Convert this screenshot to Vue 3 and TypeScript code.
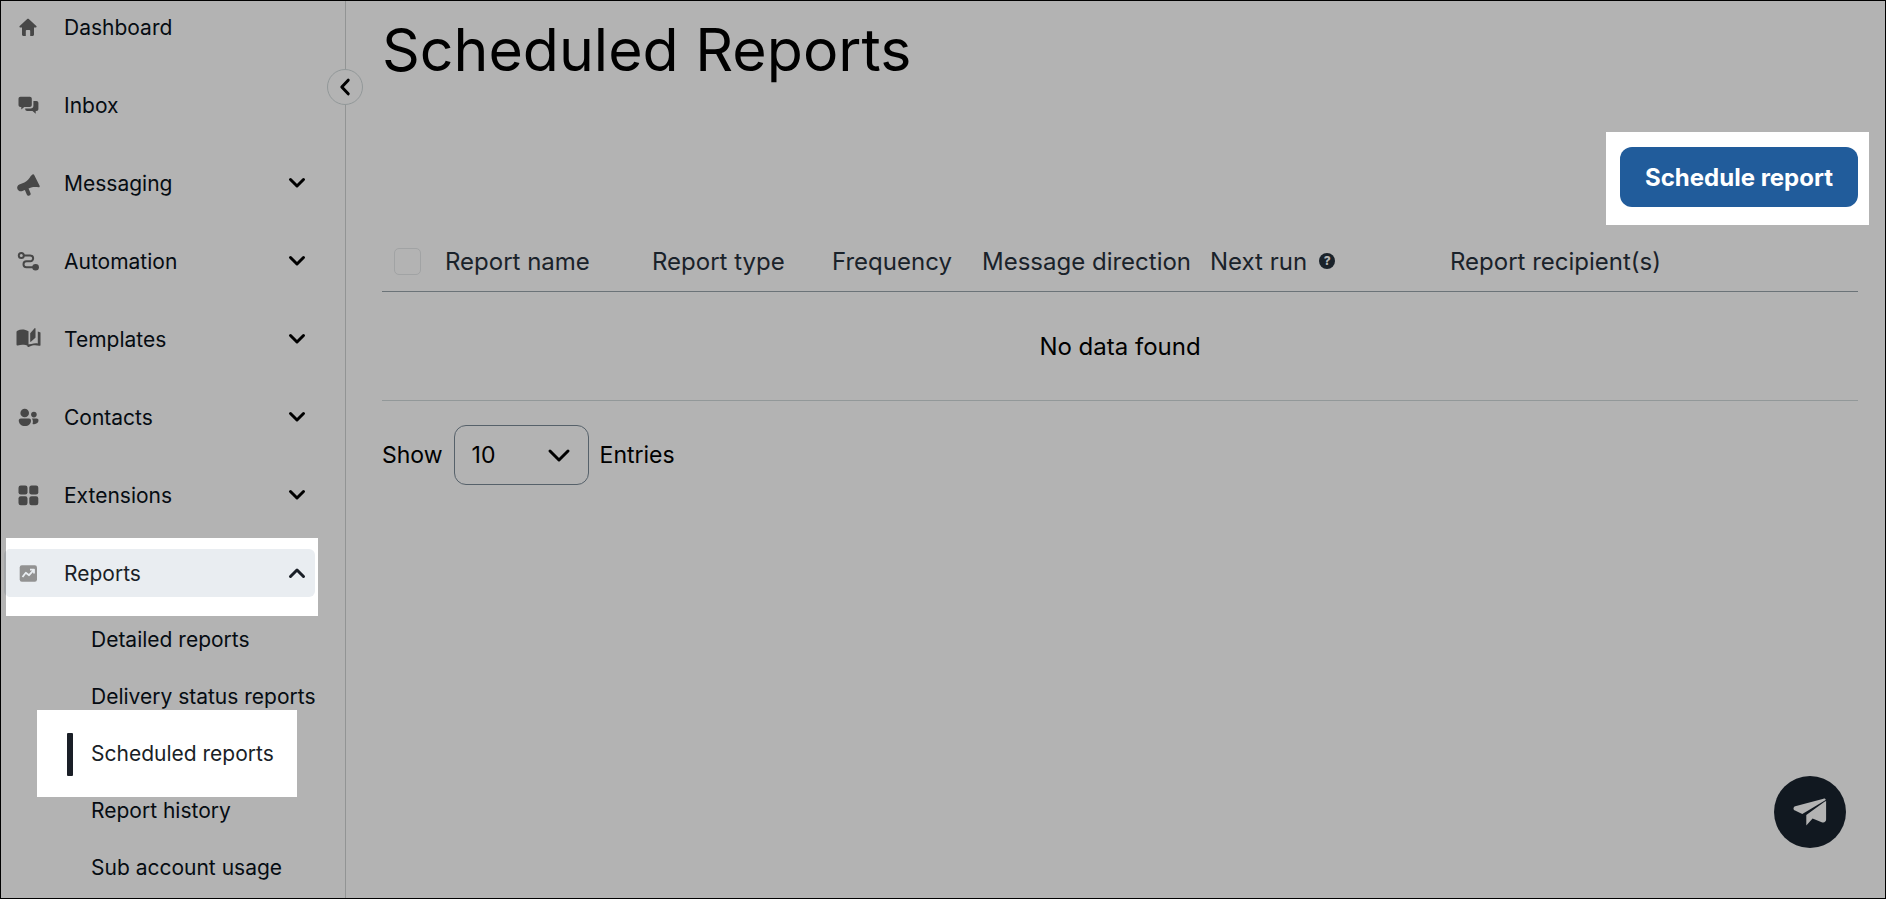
<script setup lang="ts">
import { ref } from 'vue'

interface NavItem {
  label: string
  icon: string
  expandable: boolean
}

const items: NavItem[] = [
  { label: 'Dashboard', icon: 'home', expandable: false },
  { label: 'Inbox', icon: 'inbox', expandable: false },
  { label: 'Messaging', icon: 'megaphone', expandable: true },
  { label: 'Automation', icon: 'route', expandable: true },
  { label: 'Templates', icon: 'book', expandable: true },
  { label: 'Contacts', icon: 'people', expandable: true },
  { label: 'Extensions', icon: 'grid', expandable: true },
  { label: 'Reports', icon: 'chart', expandable: true },
]

const reportPages: string[] = [
  'Detailed reports',
  'Delivery status reports',
  'Scheduled reports',
  'Report history',
  'Sub account usage',
]

const openSection = 'Reports'
const currentPage = 'Scheduled reports'
const pageSize = ref<number>(10)
const allSelected = ref<boolean>(false)
</script>

<template>
  <div class="app">
    <aside class="sidebar">
      <nav aria-label="Main">
        <ul class="nav">
          <li v-for="item in items" :key="item.label">
            <component
              :is="item.expandable ? 'button' : 'a'"
              class="nav-item"
              :class="{ open: item.label === openSection }"
              :href="item.expandable ? undefined : '#'"
              :type="item.expandable ? 'button' : undefined"
              :aria-expanded="item.expandable ? item.label === openSection : undefined"
            >
              <svg class="nav-icon" viewBox="0 0 26 26" aria-hidden="true">
                <path
                  v-if="item.icon === 'home'"
                  d="M12.2 5 4.7 12.1c-.6.6-.3 1.4.5 1.4H7v7.1c0 .8.5 1.3 1.3 1.3h2.5v-5.1c0-.5.3-.8.8-.8h2.8c.5 0 .8.3.8.8v5.1h2.500c.8 0 1.300-.5 1.300-1.300v-7.100h1.800c.8 0 1.100-.8.5-1.400L13.800 5c-.5-.5-1.100-.5-1.600 0Z"
                />
                <g v-else-if="item.icon === 'inbox'">
                  <path d="M5.500 4.700h9.300c1.200 0 2 .8 2 2v6.200c0 1.200-.8 2-2 2H9.200L6.300 17.600v-2.700h-.8c-1.200 0-2-.8-2-2V6.700c0-1.200.8-2 2-2Z" />
                  <path d="M18.400 8.900h3c1.200 0 2 .8 2 2v6.200c0 1.200-.8 2-2 2h-.7v2.700L17.500 19.100h-5.300c-1.200 0-2-.8-2-2v-.6h5.400c1.700 0 2.800-1.100 2.800-2.800Z" />
                </g>
                <g v-else-if="item.icon === 'megaphone'">
                  <path d="M15.800 6 17.500 4.500c.6-.5 1.400-.3 1.700.4l5.400 10.800c.4.8 0 1.500-.9 1.500-4.700-.5-7.800-.1-11.500 1.900l-4.800 2c-2.200.7-4-.1-4.900-1.800-.9-2 0-3.900 1.800-4.700l5.100-2.100c2.900-1.600 4.700-3.400 6.400-6.500Z" />
                  <path d="m11.300 18.300 2.300 5.400" fill="none" stroke="currentColor" stroke-width="4" stroke-linecap="round" />
                </g>
                <g v-else-if="item.icon === 'route'" fill="none" stroke="currentColor" stroke-width="2">
                  <circle cx="6.300" cy="7.400" r="2.500" />
                  <path d="M9 7.400h6.200a2.900 2.900 0 0 1 0 5.900h-3.700a3 3 0 0 0 0 6h7" />
                  <circle cx="20.600" cy="19.300" r="3.300" fill="currentColor" stroke="none" />
                </g>
                <g v-else-if="item.icon === 'book'">
                  <path d="M1.500 6c0-.6.3-1 .9-1.300 3.200-1.600 7.400-1.500 11.100.5v14.900c-3.400-1.700-7.400-1.800-10.600-.7-.9.300-1.400 0-1.400-.8Z" />
                  <path d="m15.400 7 4.200-4.700c.3-.4.900-.2.900.3v8.700c0 .3-.1.600-.4.800l-4.200 3.700c-.3.300-.7.100-.7-.3V7.800c0-.3 0-.6.2-.8Z" />
                  <path d="M22.800 5.500c1 .2 1.900.5 2.700 1v12.400c0 .8-.5 1.100-1.300.9-3.600-1.100-6.800-.8-9.400.8-.7.500-1.500.5-2.300.2v-2.200c3-.1 6.300-1.900 10.300-1.200Z" />
                </g>
                <g v-else-if="item.icon === 'people'">
                  <circle cx="9.700" cy="9" r="4.300" />
                  <path d="M5.800 14.500h8.200c1.200 0 2 .8 2 2 0 3.500-2.500 5.600-6.100 5.600s-6.100-2.100-6.100-5.600c0-1.200.8-2 2-2Z" />
                  <circle cx="18.900" cy="10.600" r="2.800" />
                  <path d="M16.900 14.500h4.700c1.200 0 1.900.7 1.900 1.800 0 2.900-2.600 4.400-5.900 3.700.5-2 .5-4-.7-5.500Z" />
                </g>
                <g v-else-if="item.icon === 'grid'">
                  <rect x="3.500" y="3.500" width="9" height="9" rx="2.200" />
                  <rect x="14.300" y="3.500" width="9" height="9" rx="2.200" />
                  <rect x="3.500" y="14.300" width="9" height="9" rx="2.200" />
                  <rect x="14.300" y="14.300" width="9" height="9" rx="2.200" />
                </g>
                <g v-else>
                  <rect x="4.700" y="5.300" width="17.300" height="16.500" rx="2.200" />
                  <path
                    d="m7.500 17 3.300-4.200 3.300 2.400 4.700-5.400M15 9.600h4v4"
                    fill="none"
                    stroke="#e9edf1"
                    stroke-width="1.800"
                    stroke-linejoin="round"
                  />
                </g>
              </svg>
              <span class="nav-label">{{ item.label }}</span>
              <svg v-if="item.expandable" class="chevron" viewBox="0 0 18 12" aria-hidden="true">
                <path :d="item.label === openSection ? 'm2.500 9.500 6.500-6.500 6.500 6.500' : 'm2.500 2.500 6.500 6.500 6.500-6.500'" />
              </svg>
            </component>
            <ul v-if="item.label === openSection" class="subnav">
              <li v-for="page in reportPages" :key="page">
                <a
                  href="#"
                  class="sub-item"
                  :class="{ current: page === currentPage }"
                  :aria-current="page === currentPage ? 'page' : undefined"
                >{{ page }}</a>
              </li>
            </ul>
          </li>
        </ul>
      </nav>
      <button type="button" class="collapse" aria-label="Collapse menu">
        <svg viewBox="0 0 12 18" aria-hidden="true"><path d="M9.200 2.200 2.800 9l6.400 6.800" /></svg>
      </button>
    </aside>

    <main class="content">
      <h1>Scheduled Reports</h1>
      <div class="actions">
        <button type="button" class="primary">Schedule report</button>
      </div>

      <table>
        <colgroup>
          <col class="c-check" />
          <col class="c-name" />
          <col class="c-type" />
          <col class="c-frequency" />
          <col class="c-direction" />
          <col class="c-next" />
          <col />
        </colgroup>
        <thead>
          <tr>
            <th class="check-cell">
              <input v-model="allSelected" type="checkbox" aria-label="Select all reports" />
            </th>
            <th>Report name</th>
            <th>Report type</th>
            <th>Frequency</th>
            <th>Message direction</th>
            <th>
              <span class="with-help">
                Next run
                <button type="button" class="help" aria-label="About next run">?</button>
              </span>
            </th>
            <th>Report recipient(s)</th>
          </tr>
        </thead>
        <tbody>
          <tr>
            <td colspan="7">No data found</td>
          </tr>
        </tbody>
      </table>

      <div class="pager">
        <label for="page-size">Show</label>
        <span class="select-box">
          <select id="page-size" v-model="pageSize">
            <option :value="10">10</option>
            <option :value="25">25</option>
            <option :value="50">50</option>
          </select>
          <svg viewBox="0 0 24 16" aria-hidden="true"><path d="m3 3 9 9 9-9" /></svg>
        </span>
        <span>Entries</span>
      </div>
    </main>

    <button type="button" class="support" aria-label="Send a message">
      <svg viewBox="0 0 34 28" aria-hidden="true">
        <path d="M2.200 8.200 30.500.7c1.300-.3 2.100.3 2.200 1.300L9.300 15.900 2 12.600C-.1 11.500.1 8.900 2.200 8.200Z" />
        <path d="M33.100 3v18.600c0 2.300-2 3.400-4.400 2.600l-9.100-3.700-6.300 6.900V16.900L31.500 3.800Z" />
      </svg>
    </button>
  </div>
</template>

<style>
body {
  margin: 0;
  background: #b3b3b3;
}
</style>

<style scoped>
.app {
  position: relative;
  display: flex;
  box-sizing: border-box;
  min-height: 100vh;
  border: 1px solid #000;
  background: #b3b3b3;
  color: #000;
  font-family: Inter, "Open Sans", sans-serif;
  font-size: 24px;
}

button,
select {
  font: inherit;
  color: inherit;
}

button {
  padding: 0;
  border: 0;
  background: none;
  cursor: pointer;
}

ul {
  margin: 0;
  padding: 0;
  list-style: none;
}

.sidebar {
  position: relative;
  flex: none;
  box-sizing: border-box;
  width: 345px;
  border-right: 1px solid #929494;
}

.nav {
  display: flex;
  flex-direction: column;
  gap: 30px;
  padding: 2px 30px 0 3px;
}

.nav-item {
  position: relative;
  isolation: isolate;
  display: flex;
  align-items: center;
  box-sizing: border-box;
  width: 100%;
  height: 48px;
  padding: 0 9px 0 11px;
  border-radius: 6px;
  color: #060c12;
  font-size: 21px;
  text-align: left;
  text-decoration: none;
}

.nav-icon {
  width: 26px;
  height: 26px;
  margin-right: 23px;
  color: #474747;
  fill: currentColor;
}

.nav-label {
  flex: 1;
}

.chevron {
  width: 18px;
  height: 12px;
  fill: none;
  stroke: #000;
  stroke-width: 3;
  stroke-linecap: round;
  stroke-linejoin: round;
}

.nav-item.open {
  background: #a3a6a9;
  color: #1a1f27;
}

/* Spotlight panel and the lit part of the open row */
.nav-item.open::before,
.nav-item.open::after {
  content: "";
  position: absolute;
  z-index: -1;
}

.nav-item.open::before {
  inset: -11px -3px -19px 2px;
  background: #fff;
}

.nav-item.open::after {
  inset: 0 0 0 2px;
  border-radius: 4px 6px 6px 4px;
  background: #e9edf1;
}

.nav-item.open .nav-icon {
  color: #929292;
}

.nav-item.open .chevron {
  stroke: #1a1f27;
}

.subnav {
  padding-top: 14px;
}

.sub-item {
  position: relative;
  isolation: isolate;
  display: flex;
  align-items: center;
  height: 57px;
  margin-right: -20px;
  padding-left: 87px;
  color: #060c12;
  font-size: 21px;
  text-decoration: none;
  white-space: nowrap;
}

.sub-item.current {
  color: #1a1f27;
}

.sub-item.current::before,
.sub-item.current::after {
  content: "";
  position: absolute;
  z-index: -1;
}

.sub-item.current::before {
  inset: -15px 38px -15px 33px;
  background: #fff;
}

.sub-item.current::after {
  top: 8px;
  left: 63px;
  width: 6px;
  height: 43px;
  border-radius: 1px;
  background: #1a1f27;
}

.collapse {
  position: absolute;
  top: 68px;
  right: -18px;
  display: grid;
  place-items: center;
  box-sizing: border-box;
  width: 36px;
  height: 36px;
  border: 1px solid #929899;
  border-radius: 50%;
  background: #b3b3b3;
}

.collapse svg {
  width: 12px;
  height: 18px;
  fill: none;
  stroke: #000;
  stroke-width: 3;
  stroke-linecap: round;
  stroke-linejoin: round;
}

.content {
  flex: 1;
  min-width: 0;
  padding: 13px 27px 0 36px;
}

h1 {
  margin: 0;
  font-size: 59px;
  font-weight: 400;
  line-height: 72px;
}

.actions {
  display: flex;
  justify-content: flex-end;
  padding-top: 61px;
}

.primary {
  position: relative;
  isolation: isolate;
  height: 60px;
  padding: 0 25px;
  color: #fff;
  font-weight: 700;
}

.primary::before,
.primary::after {
  content: "";
  position: absolute;
  z-index: -1;
}

.primary::before {
  inset: -15px -11px -18px -14px;
  background: #fff;
}

.primary::after {
  inset: 0;
  border-radius: 12px;
  background: #215c9b;
}

table {
  width: 100%;
  margin-top: 24px;
  border-collapse: separate;
  border-spacing: 0;
  table-layout: fixed;
}

.c-check { width: 63px; }
.c-name { width: 207px; }
.c-type { width: 180px; }
.c-frequency { width: 150px; }
.c-direction { width: 228px; }
.c-next { width: 240px; }

th {
  height: 60px;
  padding: 0;
  border-bottom: 1px solid #6b7378;
  color: #1a222a;
  font-weight: 400;
  text-align: left;
  white-space: nowrap;
}

.check-cell {
  padding-left: 12px;
}

input[type="checkbox"] {
  display: block;
  box-sizing: border-box;
  width: 27px;
  height: 27px;
  margin: 0;
  border: 1px solid #a1a3a4;
  border-radius: 5px;
  appearance: none;
}

.with-help {
  display: flex;
  align-items: center;
  gap: 12px;
}

.help {
  width: 16px;
  height: 16px;
  border-radius: 50%;
  background: #1a222a;
  color: #b3b3b3;
  font-size: 12px;
  font-weight: 800;
  line-height: 16px;
}

td {
  height: 108px;
  padding: 0;
  border-bottom: 1px solid #929899;
  text-align: center;
}

.pager {
  display: flex;
  align-items: center;
  gap: 11px;
  margin-top: 24px;
  font-size: 23px;
}

.select-box {
  position: relative;
  display: flex;
}

select {
  width: 135px;
  height: 60px;
  padding: 0 48px 0 17px;
  border: 1px solid #56616a;
  border-radius: 12px;
  background: transparent;
  appearance: none;
}

.select-box svg {
  position: absolute;
  top: 23px;
  right: 18px;
  width: 24px;
  height: 16px;
  fill: none;
  stroke: #000;
  stroke-width: 3;
  stroke-linecap: round;
  stroke-linejoin: round;
  pointer-events: none;
}

.support {
  position: absolute;
  right: 39px;
  bottom: 50px;
  display: grid;
  place-items: center;
  width: 72px;
  height: 72px;
  border-radius: 50%;
  background: #111820;
}

.support svg {
  width: 34px;
  height: 28px;
  fill: #b3b3b3;
}
</style>
